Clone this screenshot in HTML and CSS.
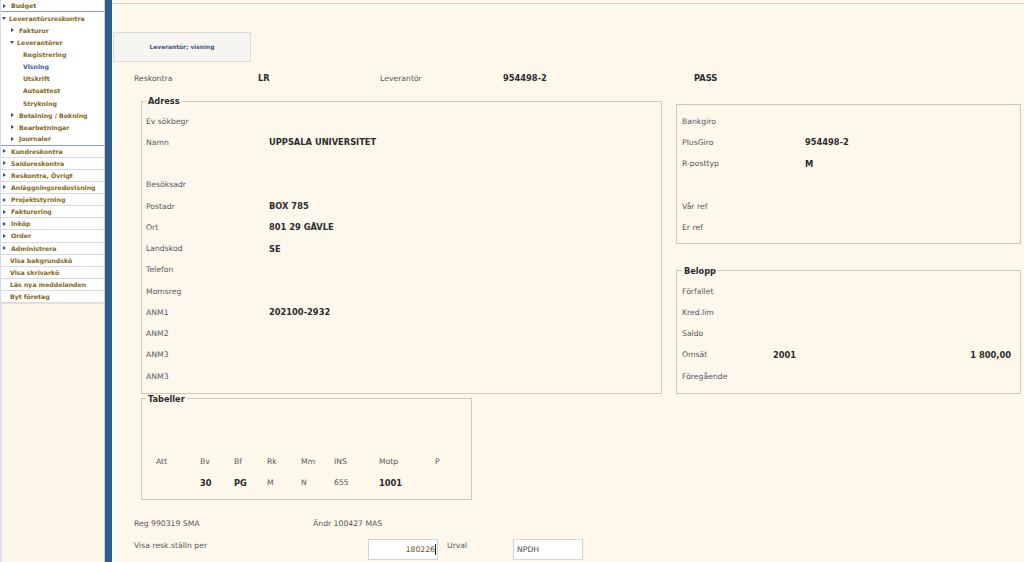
FILE: index.html
```html
<!DOCTYPE html>
<html lang="sv">
<head>
<meta charset="utf-8">
<title>Leverantör; visning</title>
<link rel="stylesheet" href="styles.css">
</head>
<body>
<div class="app">
  <nav class="side">
    <ul class="menu">
      <li class="top grp"><span class="tri-r"></span>Budget</li>
      <li class="top open"><span class="tri-d"></span>Leverantörsreskontra</li>
      <li class="l1"><span class="tri-r"></span>Fakturor</li>
      <li class="l1 open"><span class="tri-d"></span>Leverantörer</li>
      <li class="l2">Registrering</li>
      <li class="l2 active">Visning</li>
      <li class="l2">Utskrift</li>
      <li class="l2">Autoattest</li>
      <li class="l2">Strykning</li>
      <li class="l1"><span class="tri-r"></span>Betalning / Bokning</li>
      <li class="l1"><span class="tri-r"></span>Bearbetningar</li>
      <li class="l1 grp"><span class="tri-r"></span>Journaler</li>
      <li class="top"><span class="tri-r"></span>Kundreskontra</li>
      <li class="top"><span class="tri-r"></span>Saldoreskontra</li>
      <li class="top"><span class="tri-r"></span>Reskontra, Övrigt</li>
      <li class="top"><span class="tri-r"></span>Anläggningsredovisning</li>
      <li class="top"><span class="tri-r"></span>Projektstyrning</li>
      <li class="top"><span class="tri-r"></span>Fakturering</li>
      <li class="top"><span class="tri-r"></span>Inköp</li>
      <li class="top"><span class="tri-r"></span>Order</li>
      <li class="top"><span class="tri-r"></span>Administrera</li>
      <li class="top plain">Visa bakgrundskö</li>
      <li class="top plain">Visa skrivarkö</li>
      <li class="top plain">Läs nya meddelanden</li>
      <li class="top plain">Byt företag</li>
    </ul>
    <div class="filler"></div>
  </nav>
  <div class="bar"></div>
  <main class="main">
    <div class="topline"></div>
    <div class="tab">Leverantör; visning</div>
    <div class="head">
      <span class="lbl">Reskontra</span>
      <span class="val">LR</span>
      <span class="lbl">Leverantör</span>
      <span class="val">954498-2</span>
      <span class="val">PASS</span>
    </div>
    <div class="body">
      <div class="col-l">
        <fieldset class="box adress">
          <legend>Adress</legend>
          <div class="row"><span class="lbl">Ev sökbegr</span><span class="val"></span></div>
          <div class="row"><span class="lbl">Namn</span><span class="val">UPPSALA UNIVERSITET</span></div>
          <div class="row"><span class="lbl"></span><span class="val"></span></div>
          <div class="row"><span class="lbl">Besöksadr</span><span class="val"></span></div>
          <div class="row"><span class="lbl">Postadr</span><span class="val">BOX 785</span></div>
          <div class="row"><span class="lbl">Ort</span><span class="val">801 29 GÄVLE</span></div>
          <div class="row"><span class="lbl">Landskod</span><span class="val">SE</span></div>
          <div class="row"><span class="lbl">Telefon</span><span class="val"></span></div>
          <div class="row"><span class="lbl">Momsreg</span><span class="val"></span></div>
          <div class="row"><span class="lbl">ANM1</span><span class="val">202100-2932</span></div>
          <div class="row"><span class="lbl">ANM2</span><span class="val"></span></div>
          <div class="row"><span class="lbl">ANM3</span><span class="val"></span></div>
          <div class="row"><span class="lbl">ANM3</span><span class="val"></span></div>
        </fieldset>
        <fieldset class="box tabeller">
          <legend>Tabeller</legend>
          <div class="trow"></div>
          <div class="trow"></div>
          <div class="trow">
            <span></span><span class="lbl">Att</span><span class="lbl">Bv</span><span class="lbl">Bf</span><span class="lbl">Rk</span><span class="lbl">Mm</span><span class="lbl">INS</span><span class="lbl">Motp</span><span class="lbl">P</span>
          </div>
          <div class="trow">
            <span></span><span></span><span class="val">30</span><span class="val">PG</span><span class="lbl">M</span><span class="lbl">N</span><span class="lbl">655</span><span class="val">1001</span><span></span>
          </div>
        </fieldset>
      </div>
      <div class="col-r">
        <fieldset class="box giro">
          <div class="row"><span class="lbl">Bankgiro</span><span class="val"></span></div>
          <div class="row"><span class="lbl">PlusGiro</span><span class="val">954498-2</span></div>
          <div class="row"><span class="lbl">R-posttyp</span><span class="val">M</span></div>
          <div class="row"><span class="lbl"></span><span class="val"></span></div>
          <div class="row"><span class="lbl">Vår ref</span><span class="val"></span></div>
          <div class="row"><span class="lbl">Er ref</span><span class="val"></span></div>
        </fieldset>
        <fieldset class="box belopp">
          <legend>Belopp</legend>
          <div class="brow"><span class="lbl">Förfallet</span><span></span><span></span></div>
          <div class="brow"><span class="lbl">Kred.lim</span><span></span><span></span></div>
          <div class="brow"><span class="lbl">Saldo</span><span></span><span></span></div>
          <div class="brow"><span class="lbl">Omsät</span><span class="val">2001</span><span class="val amt">1 800,00</span></div>
          <div class="brow"><span class="lbl">Föregående</span><span></span><span></span></div>
        </fieldset>
      </div>
    </div>
    <div class="foot">
      <div class="frow1">
        <span class="lbl reg">Reg 990319 SMA</span>
        <span class="lbl">Ändr 100427 MAS</span>
      </div>
      <div class="frow2">
        <span class="lbl visa">Visa resk.ställn per</span>
        <span class="inp num"><span class="caret">180226</span></span>
        <span class="lbl urval">Urval</span>
        <span class="inp">NPDH</span>
      </div>
    </div>
  </main>
</div>
</body>
</html>
```

FILE: styles.css
```css
* { box-sizing: border-box; }
html, body { margin: 0; padding: 0; }
body {
  font-family: "DejaVu Sans", Verdana, sans-serif;
  background: #fdf7ec;
  width: 1024px;
  height: 562px;
  overflow: hidden;
}
.app { display: flex; height: 562px; }

/* sidebar */
.side {
  width: 105px;
  display: flex;
  flex-direction: column;
  background: #fcf6e8;
  border-right: 1px solid #c9cde0;
}
.menu {
  list-style: none;
  margin: 0;
  padding: 0;
  background: #ffffff;
  border-left: 1px solid #d8dbe6;
}
.menu li {
  height: 12.125px;
  display: flex;
  align-items: center;
  font-size: 6.2px;
  font-weight: bold;
  color: #85661a;
  white-space: nowrap;
  padding-left: 1px;
}
.menu li.top { border-bottom: 1px solid #d6d9ea; }
.menu li.open.top { border-bottom: none; }
.menu li.grp { border-bottom: 1px solid #8e9bc8; }
.menu li.plain { padding-left: 9px; }
.menu li.l1 { padding-left: 9px; }
.menu li.l2 { padding-left: 22px; }
.menu li.active { color: #3b5c9c; }
.tri-r {
  width: 0; height: 0;
  border-top: 2.5px solid transparent;
  border-bottom: 2.5px solid transparent;
  border-left: 3px solid #34507e;
  margin: 0 5px 0 1px;
}
.tri-d {
  width: 0; height: 0;
  border-left: 2.5px solid transparent;
  border-right: 2.5px solid transparent;
  border-top: 3px solid #34507e;
  margin: 0 3px 0 0;
}
.filler {
  flex: 1;
  border-left: 2px solid #dfe2ea;
  border-top: 1px solid #e6e2d8;
}
.bar { width: 7px; background: #2d5c8c; }

/* main */
.main { flex: 1; }
.lbl { font-size: 7.7px; color: #585858; white-space: nowrap; }
.val { font-size: 8.3px; font-weight: bold; color: #2c2c2c; white-space: nowrap; }

.topline { height: 4px; border-bottom: 1px solid #d8d4cb; }
.tab {
  margin: 28px 0 0 1px;
  width: 138px;
  height: 30px;
  background: #f7f5f1;
  border: 1px solid #dfdcd4;
  display: flex;
  align-items: center;
  justify-content: center;
  font-size: 5.9px;
  font-weight: bold;
  color: #3c5a80;
}
.head {
  margin-top: 6px;
  height: 20px;
  padding-left: 22px;
  display: grid;
  grid-template-columns: 124px 122px 123px 191px auto;
  align-items: center;
}

.body { display: flex; margin-top: 8px; margin-left: 29px; gap: 14px; }
.col-l { width: 521px; display: flex; flex-direction: column; }
.col-r { width: 345px; display: flex; flex-direction: column; }

.box {
  margin: 0;
  border: 1px solid #cdc9c0;
  min-width: 0;
}
.box legend {
  font-size: 8.2px;
  font-weight: bold;
  color: #2c2c2c;
  line-height: 10px;
  padding: 0 2px;
}
.row {
  display: grid;
  grid-template-columns: 123px 1fr;
  align-items: center;
  height: 21.25px;
}
.adress { padding: 4.4px 4px 6.3px 4px; }
.tabeller { width: 331px; padding: 4.4px 4px 5.6px 4px; }
.trow {
  display: grid;
  grid-template-columns: 10px 44px 34px 33px 34px 33px 45px 56px auto;
  align-items: center;
  height: 21.25px;
}
.giro { margin-top: 8px; padding: 5.4px 5px 5.1px 5px; }
.belopp { margin-top: 22px; padding: 4.4px 9px 6.3px 5px; }
.brow {
  display: grid;
  grid-template-columns: 91px 1fr auto;
  align-items: center;
  height: 21.25px;
}
.amt { text-align: right; }

.foot { padding-left: 22px; }
.frow1 {
  margin-top: 14px;
  height: 20px;
  display: flex;
  align-items: center;
}
.reg { width: 179px; }
.frow2 {
  margin-top: 4px;
  display: flex;
  align-items: flex-start;
}
.visa { width: 234px; padding-top: 3px; line-height: 10px; }
.urval { width: 66px; margin-left: 9px; padding-top: 3px; line-height: 10px; }
.inp {
  margin-top: 1px;
  width: 70px;
  height: 21px;
  background: #ffffff;
  border: 1px solid #d4d2cd;
  font-size: 7.7px;
  color: #4a4a4a;
  display: flex;
  align-items: center;
  padding: 0 3px;
}
.inp.num { justify-content: flex-end; padding-right: 1px; color: #6e5326; }
.caret { border-right: 1px solid #222; line-height: 11px; }
```
